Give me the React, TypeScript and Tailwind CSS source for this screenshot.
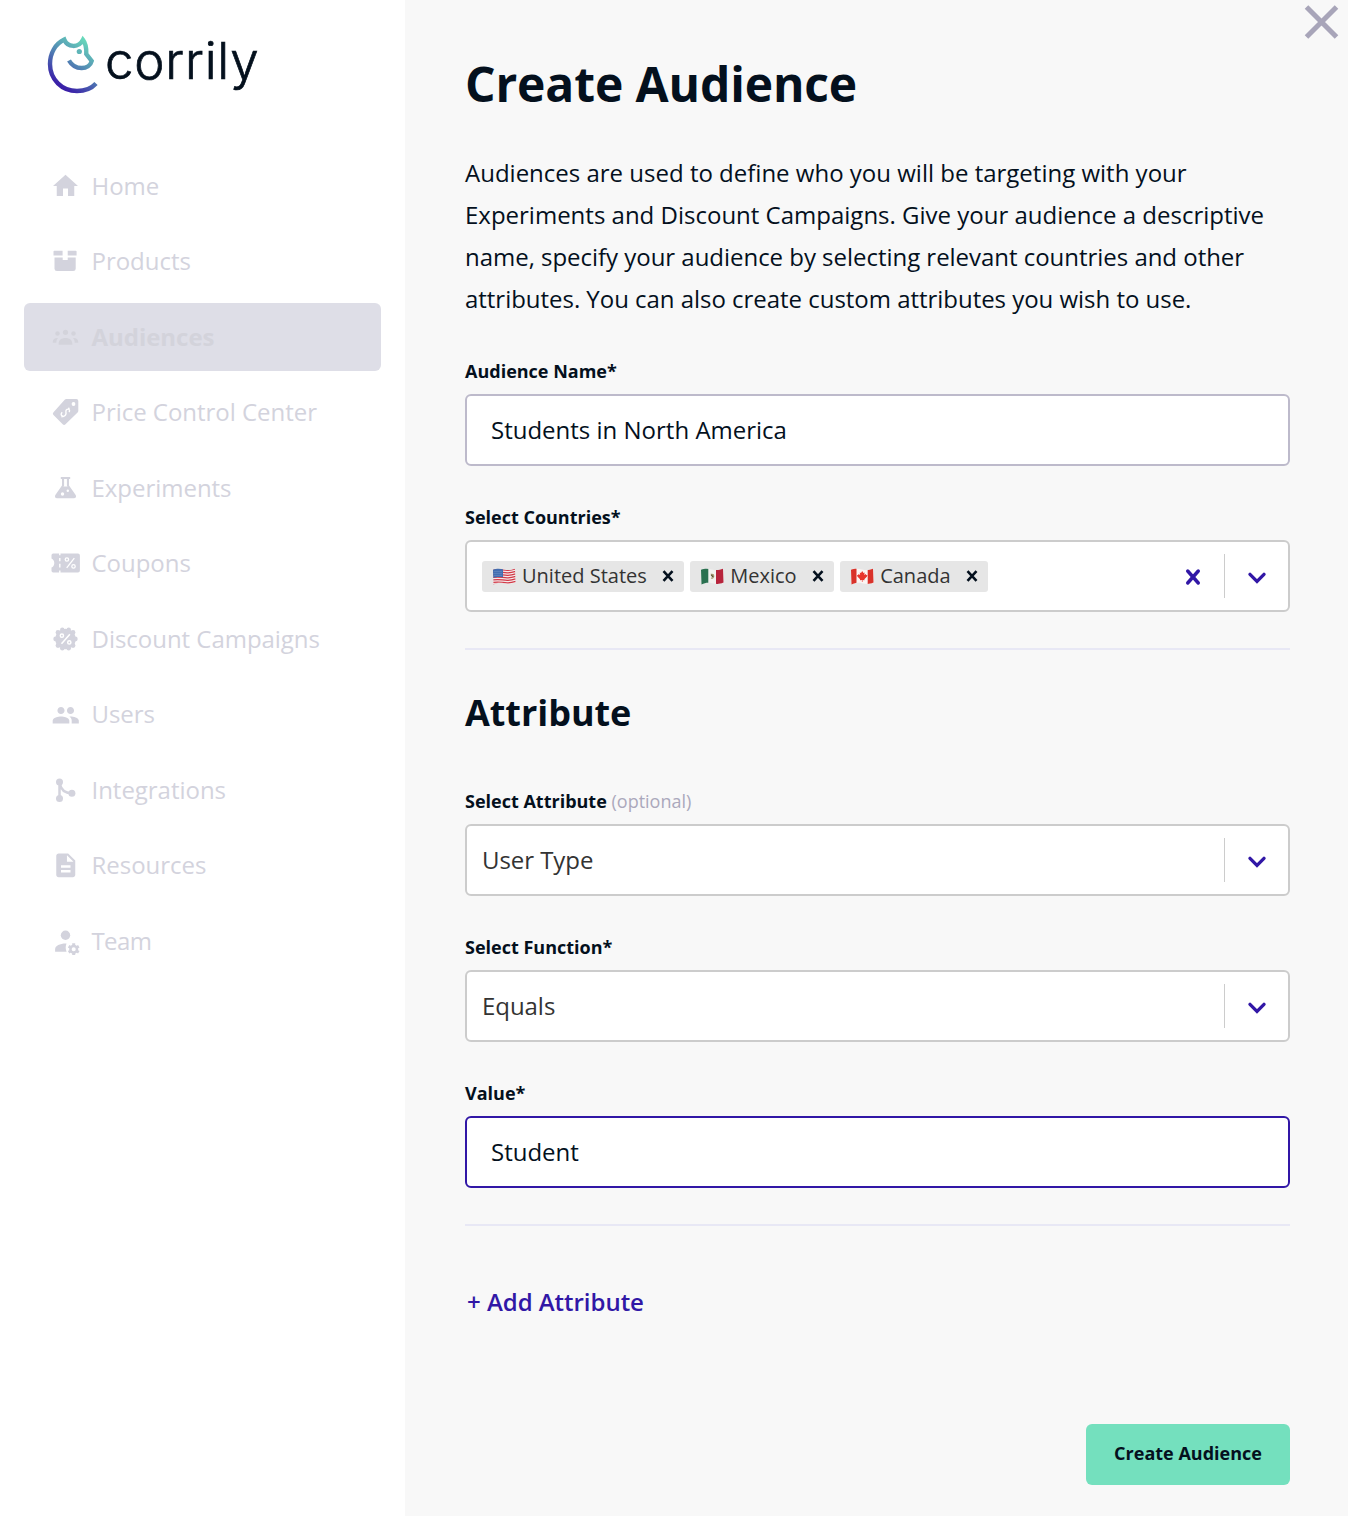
import React from "react";
import { MdHome, MdPeople, MdDescription } from "react-icons/md";

function BoxIcon() {
  return (
    <svg width="30" height="30" viewBox="0 0 30 30" fill="currentColor">
      <path d="M3.800 4.800h8.300v4.700H3v-3.900q0-.8.8-.8zM17.200 4.800h8q.9 0 .9.800v3.900h-8.900zM4 11.500h8.200v2.500h5v-2.500h8v11.300q0 2.300-2.500 2.300H6.500q-2.500 0-2.500-2.300z" />
    </svg>
  );
}

function AudienceIcon() {
  return (
    <svg width="30" height="30" viewBox="0 0 30 30" fill="currentColor">
      <circle cx="15" cy="10.300" r="2.600" />
      <circle cx="7" cy="11.500" r="2.200" />
      <circle cx="23" cy="11.500" r="2.200" />
      <path d="M8.200 22.800v-1.300c0-3.400 2.600-5.500 6.800-5.500s6.800 2.100 6.800 5.500v1.300zM2.300 20.700v-.8c0-2.700 2.200-4.200 5.200-3.900-1.100 1.300-1.700 2.800-1.700 4.700zM27.700 20.700v-.8c0-2.700-2.200-4.200-5.200-3.900 1.100 1.300 1.700 2.800 1.700 4.700z" />
    </svg>
  );
}

function PriceTagIcon() {
  return (
    <svg width="30" height="30" viewBox="0 0 30 30" fill="currentColor">
      <path d="M15.800 2h10q2 0 2 2v9.800q0 1-.7 1.700L15 27.200q-1.400 1.400-2.800 0L3 18q-1.400-1.400 0-2.800L14.200 2.700q.7-.7 1.600-.7z" />
      <circle cx="23" cy="7" r="1.900" fill="white" />
      <path
        d="M18.900 10.800l-1.500 1.600M11 20.200l1.500-1.600M18.600 15.200c1.200-2.200-.2-3.700-2.100-2.800-2.200 1.100-.7 2.700-1 4.300-.3 1.700-1.800 3-3.200 2.700-2-.4-2.100-2.600-.6-4.200"
        fill="none"
        stroke="white"
        strokeWidth="1.400"
      />
    </svg>
  );
}

function FlaskIcon() {
  return (
    <svg width="30" height="30" viewBox="0 0 30 30" fill="currentColor">
      <path d="M10.300 4h9.400v2h-1.200v6.400l6.500 9.400c1.200 1.800.3 3.500-1.600 3.500H6.600c-1.900 0-2.800-1.700-1.600-3.500l6.500-9.400V6h-1.200z" />
      <path d="M13.600 6h2.800v6.600l.6 1h-4l.6-1z" fill="white" />
      <circle cx="12" cy="21" r="1.700" fill="white" />
      <circle cx="17.300" cy="17.700" r="1.200" fill="white" />
    </svg>
  );
}

function CouponIcon() {
  return (
    <svg width="30" height="30" viewBox="0 0 30 30" fill="currentColor">
      <path d="M2.700 5.500h24.800q1.900 0 1.900 1.900v15.200q0 1.900-1.900 1.900H2.700Q1 24.500 1 22.800v-3.200c1.600-.6 2.800-2.400 2.800-4.600S2.600 11 1 10.400V7.200q0-1.700 1.700-1.700z" />
      <path d="M9.300 5v2.200M9.300 10v3.300M9.300 15.800v3.600M9.300 22.600v2.400" stroke="white" strokeWidth="1.400" />
      <g fill="none" stroke="white" strokeWidth="1.300">
        <path d="M23.800 10.200l-7.600 9.600" />
        <circle cx="16.400" cy="11.500" r="1.700" />
        <circle cx="23" cy="18.400" r="1.700" />
      </g>
    </svg>
  );
}

function DiscountIcon() {
  return (
    <svg width="30" height="30" viewBox="0 0 30 30" fill="currentColor">
      <circle cx="15" cy="15" r="10.300" />
      <circle cx="18.200" cy="5.700" r="2.200" />
      <circle cx="11.800" cy="5.700" r="2.200" />
      <circle cx="22.500" cy="8.500" r="2.400" />
      <circle cx="7.500" cy="8.500" r="2.400" />
      <circle cx="24.800" cy="15" r="2.400" />
      <circle cx="5.200" cy="15" r="2.400" />
      <circle cx="22.500" cy="21.500" r="2.400" />
      <circle cx="7.500" cy="21.500" r="2.400" />
      <circle cx="18.200" cy="24.300" r="2.200" />
      <circle cx="11.800" cy="24.300" r="2.200" />
      <g fill="none" stroke="white" strokeWidth="1.500">
        <path d="M19.400 10.200l-8.400 9.600" />
        <circle cx="11.400" cy="11.700" r="1.600" />
        <circle cx="18.800" cy="18.400" r="1.600" />
      </g>
    </svg>
  );
}

function MergeIcon() {
  return (
    <svg width="30" height="30" viewBox="0 0 30 30" fill="currentColor">
      <circle cx="9" cy="7" r="3.500" />
      <circle cx="9" cy="23.400" r="3.500" />
      <circle cx="21.400" cy="18.200" r="3.500" />
      <path d="M9 7v16M9.500 9c.8 5.500 5 8.800 11.500 9.200" fill="none" stroke="currentColor" strokeWidth="2.500" />
    </svg>
  );
}

function TeamIcon() {
  return (
    <svg width="30" height="30" viewBox="0 0 30 30" fill="currentColor" className="overflow-visible">
      <circle cx="15" cy="9.300" r="4.700" />
      <path d="M4.600 25.800v-2.500c0-3.600 5.200-5.900 11.400-5.700-1 2.500-1.200 5.300.1 8.200z" />
      <circle cx="23.200" cy="23.200" r="3.300" fill="none" stroke="currentColor" strokeWidth="2.500" />
      <path d="M23.200 17.300v2M23.200 27.100v2M18.100 20.200l1.800 1M26.500 25.200l1.800 1M18.100 26.200l1.800-1M26.500 21.200l1.800-1" stroke="currentColor" strokeWidth="3" />
    </svg>
  );
}

const nav = [
  { label: "Home", icon: <MdHome size={30} /> },
  { label: "Products", icon: <BoxIcon /> },
  { label: "Audiences", icon: <AudienceIcon />, active: true },
  { label: "Price Control Center", icon: <PriceTagIcon /> },
  { label: "Experiments", icon: <FlaskIcon /> },
  { label: "Coupons", icon: <CouponIcon /> },
  { label: "Discount Campaigns", icon: <DiscountIcon /> },
  { label: "Users", icon: <MdPeople size={28.500} className="mt-px" /> },
  { label: "Integrations", icon: <MergeIcon /> },
  { label: "Resources", icon: <MdDescription size={28.500} /> },
  { label: "Team", icon: <TeamIcon /> },
];

function Logo() {
  return (
    <div className="flex h-[64px] items-center">
      <svg width="54" height="60" viewBox="46 35 54 60" fill="none" className="shrink-0">
        <defs>
          <linearGradient id="fox" gradientUnits="userSpaceOnUse" x1="58" y1="84" x2="88" y2="40">
            <stop offset="0" stopColor="#3A1FA8" />
            <stop offset="0.5" stopColor="#5288B4" />
            <stop offset="1" stopColor="#69DDBB" />
          </linearGradient>
        </defs>
        <path
          d="M96 83.500C91 89 84 91 77 91C62 91 50 79.500 50 64C50 53 55.500 43.800 64.300 39.600C67.500 47.500 78.500 48.500 83 39.800C86 43.500 86.500 48.500 86.300 54L91.700 61C89.500 70 75 71 69 60.500"
          stroke="url(#fox)"
          strokeWidth="4.400"
        />
        <circle cx="79.300" cy="51.500" r="2.600" fill="#5FB5B8" />
      </svg>
      <span className="-mt-[9px] ml-[5px] font-['Inter'] text-[51px] leading-[60px] font-light tracking-[0.800px] text-[#04101D] [-webkit-text-stroke:0.7px_#04101D]">
        corrily
      </span>
    </div>
  );
}

function Cross() {
  return (
    <svg width="12" height="12" viewBox="0 0 12 12" fill="none" stroke="currentColor" strokeWidth="2.600">
      <path d="M1.500 1.200l9 9.600M10.500 1.200l-9 9.600" />
    </svg>
  );
}

const flagShape = "M1 1.800C5 .2 8 .6 12 1.500S19 2.300 23 .8L23.500 14.500C19 16.500 16 16 12 15.200S5 14.800 1.500 16.500z";

function Flag({ code }: { code: string }) {
  return (
    <svg width="24" height="17" viewBox="0 0 24 17" className="shrink-0">
      <defs>
        <clipPath id={"flag-" + code}>
          <path d={flagShape} />
        </clipPath>
      </defs>
      <g clipPath={`url(#flag-${code})`}>
        {code === "us" && (
          <>
            <rect width="24" height="17" fill="#F3E9EA" />
            <path
              d="M0 2.200C7 .4 11 2.600 16 2.300S22 1.300 24 .8M0 4.700C7 2.900 11 5.100 16 4.800S22 3.800 24 3.300M0 7.200C7 5.400 11 7.600 16 7.300S22 6.300 24 5.800M0 9.700C7 7.900 11 10.100 16 9.800S22 8.800 24 8.300M0 12.200C7 10.400 11 12.600 16 12.300S22 11.300 24 10.800M0 14.700C7 12.900 11 15.100 16 14.800S22 13.800 24 13.300M0 16.800C7 15 11 16.900 16 16.900"
              fill="none"
              stroke="#D23A48"
              strokeWidth="1.250"
            />
            <path d="M0 0h11v9.500C8 8.800 5 8.800 0 10z" fill="#416DB0" />
            <path d="M2.500 3.400h8M2.500 5.400h8M2.500 7.400h8" stroke="#8CA9D2" strokeWidth=".7" strokeDasharray="1 1" />
          </>
        )}
        {code === "mx" && (
          <>
            <rect width="24" height="17" fill="#F2F1EF" />
            <rect width="8.300" height="17" fill="#2A7050" />
            <rect x="16" width="8" height="17" fill="#B7243C" />
            <path d="M10.700 6.300q3.300-.6 3 2.200-.5 2.200-2.700 1.500" fill="none" stroke="#A99A72" strokeWidth="1.100" />
            <path d="M11.300 6.800l1.800 2.200" stroke="#5D5330" strokeWidth="1.400" />
          </>
        )}
        {code === "ca" && (
          <>
            <rect width="24" height="17" fill="#FBF5F3" />
            <rect width="6.500" height="17" fill="#D9322A" />
            <rect x="17.700" width="7" height="17" fill="#D9322A" />
            <path
              d="M12.200 3l1.200 2 1.200-.5-.3 2.500 1.600-1 .3 1 1.300.3-.7 1.500-2.500 2.500.2 1-2-.2v2h-.6v-2l-2 .2.200-1-2.500-2.500-.7-1.500 1.300-.3.300-1 1.600 1-.3-2.500 1.200.5z"
              fill="#E8372D"
            />
          </>
        )}
      </g>
    </svg>
  );
}

function Chip({ code, name }: { code: string; name: string }) {
  return (
    <div className="flex h-[31px] items-center rounded-[3px] bg-[#E6E6E6] pl-[10px] text-[#333333]">
      <Flag code={code} />
      <span className="ml-[6px] text-[20px] leading-[30px]">{name}</span>
      <span className="mr-[10px] ml-[15.500px] text-[#04101D]">
        <Cross />
      </span>
    </div>
  );
}

function SelectBox({ children, clearable }: { children: React.ReactNode; clearable?: boolean }) {
  return (
    <div className="flex h-[72px] items-center rounded-[6px] border-2 border-[#CCCCCC] bg-white pl-[15px] text-[#333333]">
      <div className="flex flex-1 items-center gap-[6px] text-2xl">{children}</div>
      {clearable && (
        <svg className="mt-[2px] mr-[23px] text-[#3117A6]" width="16" height="18" viewBox="0 0 16 18" fill="none" stroke="currentColor" strokeWidth="3.400" strokeLinecap="round">
          <path d="M2.700 3l10.600 12M13.300 3L2.700 15" />
        </svg>
      )}
      <div className="h-11 w-px bg-[#CCCCCC]" />
      <svg className="mt-[4px] mr-[21px] ml-[23px] text-[#3117A6]" width="19" height="12" viewBox="0 0 19 12" fill="none" stroke="currentColor" strokeWidth="3.300" strokeLinecap="round">
        <path d="M2 2.300l7 7 7-7" />
      </svg>
    </div>
  );
}

function Field({ label, note, children, className = "" }: { label: string; note?: string; children: React.ReactNode; className?: string }) {
  return (
    <div className={className}>
      <div className="mb-[11px] h-6 text-[18px] leading-6 font-bold whitespace-pre">
        {label}
        {note && <span className="font-normal text-[#ABA8BC]"> {note}</span>}
      </div>
      {children}
    </div>
  );
}

export default function App() {
  return (
    <div className="flex h-[1516px] w-[1348px] overflow-hidden bg-white font-['Open_Sans',sans-serif] text-[#04101D]">
      <aside className="w-[405px] shrink-0 px-6 pt-[33px]">
        <div className="pl-[22px]">
          <Logo />
        </div>
        <nav className="mt-[55px] flex flex-col gap-2">
          {nav.map((item) => (
            <a
              key={item.label}
              className={
                item.active
                  ? "flex h-[67.500px] w-[357px] items-center rounded-[6px] bg-[#DEDEE7] pl-[26px] font-bold text-[#D3D3DB]"
                  : "flex h-[67.500px] w-[357px] items-center rounded-[6px] pl-[26px] text-[#D3D3DD]"
              }
            >
              <span className="flex w-[30px] translate-x-[0.500px] justify-center">{item.icon}</span>
              <span className={item.label === "Team" ? "ml-[11.500px] text-2xl leading-8 tracking-[-0.6px]" : "ml-[11.500px] text-2xl leading-8 tracking-[-0.03px]"}>
                {item.label}
              </span>
            </a>
          ))}
        </nav>
      </aside>

      <main className="relative flex-1 bg-[#F8F8F8] pr-[58px] pl-[60px]">
        <button className="absolute top-[5px] right-[9px] text-[#A8A5B9]">
          <svg width="35" height="35" viewBox="0 0 35 35" fill="none" stroke="currentColor" strokeWidth="5">
            <path d="M2.500 2l30 30M32.500 2l-30 30" />
          </svg>
        </button>
        <h1 className="mt-[52px] text-[48px] leading-[64px] font-bold tracking-[-0.13px]">Create Audience</h1>
        <p className="mt-[36px] text-2xl leading-[42px] whitespace-nowrap">
          Audiences are used to define who you will be targeting with your
          <br />
          Experiments and Discount Campaigns. Give your audience a descriptive
          <br />
          <span className="tracking-[-0.03px]">name, specify your audience by selecting relevant countries and other</span>
          <br />
          <span className="tracking-[-0.03px]">attributes. You can also create custom attributes you wish to use.</span>
        </p>
        <Field label="Audience Name*" className="mt-[39px]">
          <div className="flex h-[72px] items-center rounded-[6px] border-2 border-[#BDBACB] bg-white pl-6 text-2xl">Students in North America</div>
        </Field>
        <Field label="Select Countries*" className="mt-[39px]">
          <SelectBox clearable>
            <Chip code="us" name="United States" />
            <Chip code="mx" name="Mexico" />
            <Chip code="ca" name="Canada" />
          </SelectBox>
        </Field>
        <hr className="mt-[36px] border-t-2 border-[#E8E8F5]" />
        <h2 className="mt-[39px] text-[36px] leading-[48px] font-bold tracking-[-0.05px]">Attribute</h2>
        <Field label="Select Attribute" note="(optional)" className="mt-[52px]">
          <SelectBox>
            <span className="tracking-[-0.05px]">User Type</span>
          </SelectBox>
        </Field>
        <Field label="Select Function*" className="mt-[39px]">
          <SelectBox>
            <span className="tracking-[-0.05px]">Equals</span>
          </SelectBox>
        </Field>
        <Field label="Value*" className="mt-[39px]">
          <div className="flex h-[72px] items-center rounded-[6px] border-2 border-[#3117A6] bg-white pl-6 text-2xl">Student</div>
        </Field>
        <hr className="mt-[36px] border-t-2 border-[#E8E8F5]" />
        <button className="mt-[60px] ml-[2px] block text-2xl leading-8 font-semibold tracking-[-0.03px] text-[#3117A6]">+ Add Attribute</button>
        <div className="mt-[106px] flex justify-end">
          <button className="h-[61px] w-[204px] rounded-[6px] bg-[#74E0BE] pb-[2px] text-[18px] font-bold">Create Audience</button>
        </div>
      </main>
    </div>
  );
}
